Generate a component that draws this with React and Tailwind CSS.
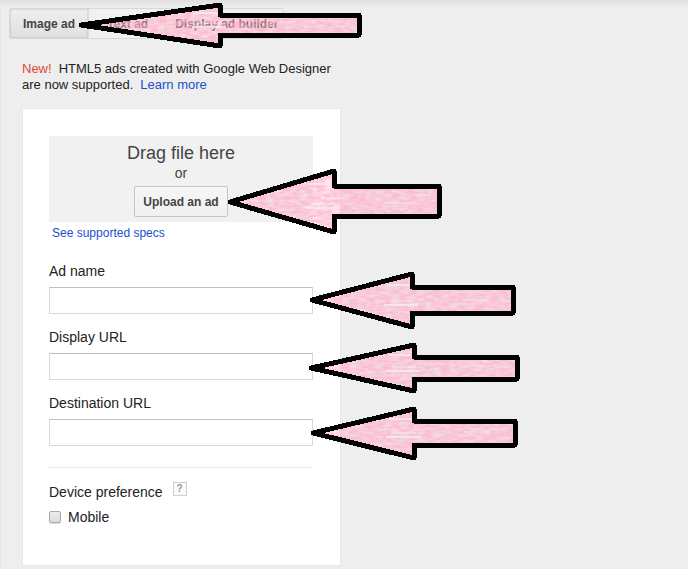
import { useState } from 'react';

const TABS = ['Image ad', 'Text ad', 'Display ad builder'];

const FIELDS = [
  { id: 'ad-name', label: 'Ad name' },
  { id: 'display-url', label: 'Display URL' },
  { id: 'destination-url', label: 'Destination URL' },
];

// Callout arrows: tip, neck of the head, end of the shaft
const ARROWS = [
  { tip: 81, y: 25, neck: 220, top: 5, bottom: 46, shaftTop: 15, shaftBottom: 35, end: 359 },
  { tip: 230, y: 202, neck: 334, top: 171, bottom: 232, shaftTop: 186, shaftBottom: 216, end: 439 },
  { tip: 312, y: 300, neck: 412, top: 274, bottom: 327, shaftTop: 287, shaftBottom: 313, end: 513 },
  { tip: 311, y: 368, neck: 414, top: 345, bottom: 391, shaftTop: 357, shaftBottom: 379, end: 517 },
  { tip: 313, y: 433, neck: 414, top: 409, bottom: 458, shaftTop: 421, shaftBottom: 445, end: 515 },
];

function arrowPoints(a) {
  return [
    [a.tip, a.y],
    [a.neck, a.top],
    [a.neck, a.shaftTop],
    [a.end, a.shaftTop],
    [a.end, a.shaftBottom],
    [a.neck, a.shaftBottom],
    [a.neck, a.bottom],
  ].map(p => p.join(',')).join(' ');
}

function Arrow({ arrow }) {
  const points = arrowPoints(arrow);
  const { neck, shaftTop, shaftBottom } = arrow;

  return (
    <g>
      <polygon points={points} fill="#ffb0c8" fillOpacity="0.8" filter="url(#crayon)" />
      <g stroke="#f4f0f1" strokeOpacity="0.75" strokeWidth="2">
        <path d={`M${neck - 25} ${shaftTop - 2}h22M${neck - 28} ${shaftBottom - 8}h34`} />
        <path d={`M${neck - 22} ${shaftBottom - 12}h24`} strokeWidth="1" />
        <path d={`M${neck + 50} ${shaftBottom - 13}h26`} strokeWidth="1" />
      </g>
      <polygon
        points={points}
        fill="none"
        stroke="#000"
        strokeWidth="5"
        strokeLinejoin="round"
        shapeRendering="crispEdges"
      />
    </g>
  );
}

function Arrows() {
  return (
    <svg className="absolute top-0 left-0 pointer-events-none" width="530" height="480" aria-hidden="true">
      <defs>
        <filter id="crayon" x="0" y="0" width="1" height="1" colorInterpolationFilters="sRGB">
          <feTurbulence type="fractalNoise" baseFrequency="0.12 0.35" numOctaves="4" seed="4" result="noise" />
          <feColorMatrix in="noise" type="matrix" values="0 0 0 0 0  0 0 0 0 0  0 0 0 0 0  1.4 0 0 0 0.05" result="grain" />
          <feComposite in="SourceGraphic" in2="grain" operator="in" />
        </filter>
      </defs>
      {ARROWS.map(arrow => (
        <Arrow key={arrow.y} arrow={arrow} />
      ))}
    </svg>
  );
}

function TabBar({ active, onChange }) {
  return (
    <div className="flex w-fit rounded-xs border border-[#d8d8d8] text-xs font-bold text-[#444]">
      {TABS.map(tab => (
        <button
          key={tab}
          type="button"
          onClick={() => onChange(tab)}
          className={
            tab === active
              ? 'h-[29px] px-[13px] bg-linear-to-b from-[#eeeeee] to-[#e0e0e0] shadow-[inset_0_0_2px_#aaa]'
              : 'h-[29px] pl-[9px] pr-1 border-l border-[#dcdcdc] nth-2:pl-[18px] nth-2:pr-[17px] bg-[#f1f1f1]'
          }
        >
          {tab}
        </button>
      ))}
    </div>
  );
}

function App() {
  const [tab, setTab] = useState('Image ad');
  const [mobile, setMobile] = useState(false);

  return (
    <div className="relative min-h-screen bg-[#eeeeee] shadow-[inset_1px_0_0_#e4e4e4] font-['Liberation_Sans',Arial,sans-serif] text-[#222]">
      <div className="h-2 bg-linear-to-b from-[#dfdfdf] to-[#eeeeee]"></div>

      <div className="pl-[9px]">
        <TabBar active={tab} onChange={setTab} />

        <div className="pl-[13px] pt-[22px]">
          <div className="text-[13px] leading-4">
            <div className="flex gap-[7px]">
              <span className="text-[#dd4b39]">New!</span>
              <span>HTML5 ads created with Google Web Designer</span>
            </div>
            <div className="flex gap-[7px]">
              <span>are now supported.</span>
              <a href="#learn" className="text-[#1a4fcf]">Learn more</a>
            </div>
          </div>

          <form className="mt-[15px] w-full max-w-[319px] bg-white border border-[#e8e8e8] pl-[26px] pr-[27px] pt-[27px] pb-[38px]">
            <div className="flex flex-col items-center bg-[#f1f1f1] py-[5px]">
              <div className="text-lg leading-6 text-[#444]">Drag file here</div>
              <div className="text-sm leading-4 text-[#444]">or</div>
              <button
                type="button"
                className="mt-[5px] h-[31px] px-2 rounded-xs border border-[#c6c6c6] bg-linear-to-b from-[#f6f6f6] to-[#f0f0f0] text-xs font-bold text-[#444]"
              >
                Upload an ad
              </button>
            </div>
            <a href="#specs" className="block w-fit ml-[3px] mt-[3px] text-xs leading-4 text-[#1a4fcf]">See supported specs</a>

            <div className="mt-5 flex flex-col gap-[13px]">
              {FIELDS.map(field => (
                <div key={field.id}>
                  <label htmlFor={field.id} className="block text-sm leading-5">{field.label}</label>
                  <input
                    id={field.id}
                    type="text"
                    className="block mt-1.5 h-[27px] w-full border border-[#d9d9d9] border-t-[#c0c0c0] bg-white px-2 text-[13px]"
                  />
                </div>
              ))}
            </div>

            <hr className="mt-[21px] border-[#e8e8e8]" />

            <div className="mt-3.5 flex items-start gap-2.5">
              <span className="text-sm leading-5">Device preference</span>
              <button
                type="button"
                aria-label="Help"
                className="size-3.5 border border-[#d0d0d0] bg-[#fafafa] text-[10px] leading-3 font-bold text-[#999]"
              >
                ?
              </button>
            </div>
            <label className="mt-[5px] flex w-fit items-center gap-[7px] text-sm leading-5">
              <input
                type="checkbox"
                checked={mobile}
                onChange={(e) => setMobile(e.target.checked)}
                className="size-3 appearance-none rounded-xs border border-[#a9a9a9] bg-linear-to-b from-[#ececec] to-[#dcdcdc] shadow-[0_1px_1px_#ddd] checked:bg-[#4d7cd8]"
              />
              Mobile
            </label>
          </form>
        </div>
      </div>

      <Arrows />
    </div>
  );
}

export default App;
